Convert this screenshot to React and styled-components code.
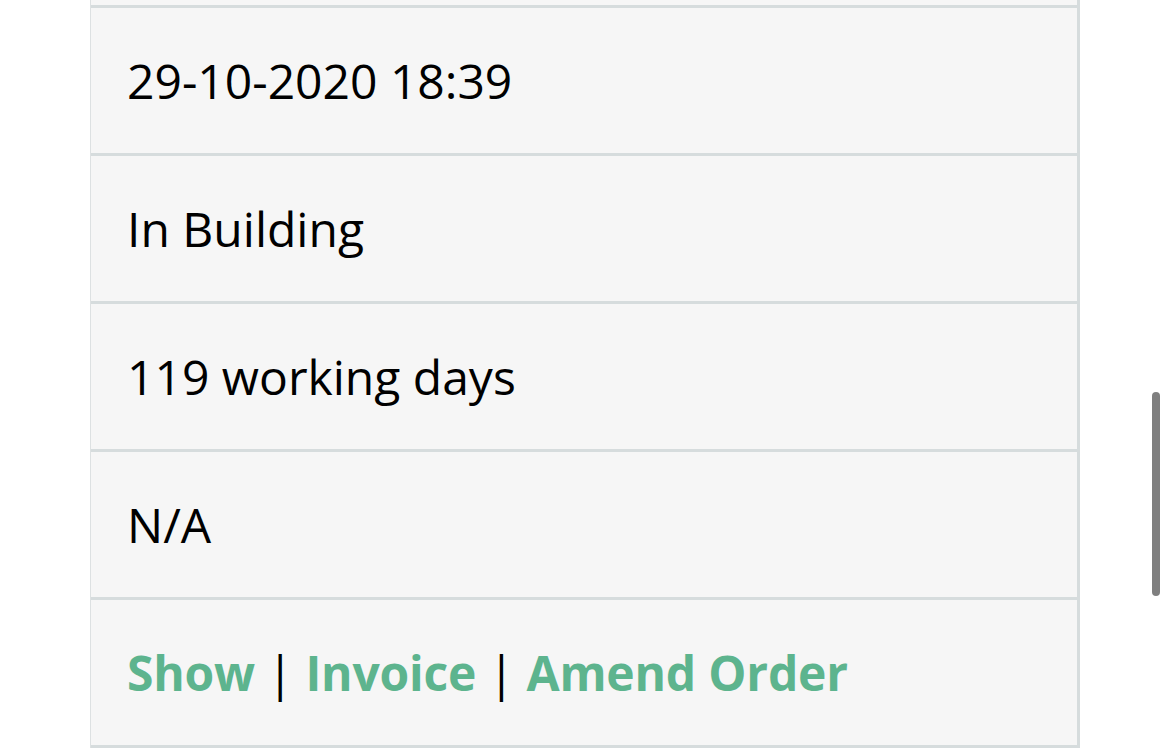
import React from "react";
import styled, { createGlobalStyle } from "styled-components";

const GlobalStyle = createGlobalStyle`
  html, body {
    margin: 0;
    padding: 0;
    background: #fff;
    overflow: hidden;
  }
  body {
    font-family: "Open Sans", "Noto Sans", sans-serif;
  }
`;

const Page = styled.div`
  position: relative;
  height: 754px;
  padding-left: 90px;
  box-sizing: border-box;
`;

const Table = styled.div`
  width: 990px;
  box-sizing: border-box;
  border-left: 1px solid #dde1e2;
  border-right: 3px solid #d6dcdd;
  display: flex;
  flex-direction: column;
`;

const Cell = styled.div`
  height: ${(props) => (props.cut ? "5px" : "145px")};
  background: #f6f6f6;
  border-bottom: 3px solid #d6dcdd;
  padding: 0 0 0 36px;
  display: flex;
  align-items: center;
  font-size: 48px;
  color: #000;
  white-space: nowrap;
`;

const Link = styled.a`
  color: #5db48e;
  font-weight: 700;
  letter-spacing: -0.2px;
  text-decoration: none;
`;

const Sep = styled.span`
  color: #000;
  margin: 0 12px;
`;

const ScrollThumb = styled.div`
  position: absolute;
  left: 1152px;
  top: 392px;
  width: 8px;
  height: 204px;
  border-radius: 4px;
  background: #7f7f7f;
`;

const rows = ["29-10-2020 18:39", "In Building", "119 working days", "N/A"];

export default function App() {
  return (
    <Page>
      <GlobalStyle />
      <Table>
        <Cell cut />
        {rows.map((text) => (
          <Cell key={text}>{text}</Cell>
        ))}
        <Cell>
          <Link href="#">Show</Link>
          <Sep>|</Sep>
          <Link href="#">Invoice</Link>
          <Sep>|</Sep>
          <Link href="#">Amend Order</Link>
        </Cell>
      </Table>
      <ScrollThumb />
    </Page>
  );
}
